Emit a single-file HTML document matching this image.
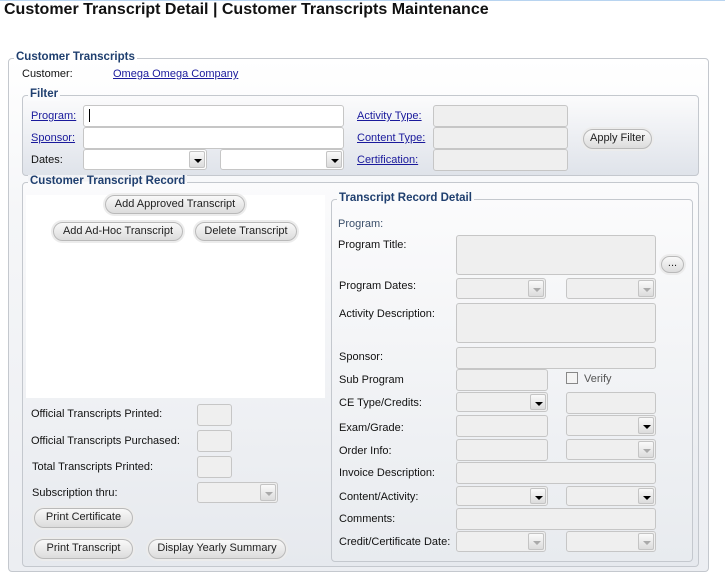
<!DOCTYPE html>
<html><head><style>
*{box-sizing:border-box;margin:0;padding:0}
body{width:725px;height:580px;background:#fff;position:relative;overflow:hidden;font-family:"Liberation Sans",sans-serif;font-size:11px;color:#111}
.a{position:absolute}
.box{position:absolute;border:1px solid #c4c8ce;border-radius:4px}
.lg{position:absolute;font-weight:bold;color:#1f3f6f;font-size:11.5px;padding:0 2px;white-space:nowrap;line-height:13px}
.lb{position:absolute;white-space:nowrap}
.lk{position:absolute;white-space:nowrap;color:#1a1a9c;text-decoration:underline}
.f{position:absolute;background:#efefef;border:1px solid #c6c6c6;border-radius:3px}
.w{background:#fff}
.dd{position:absolute;background:#efefef;border:1px solid #c6c6c6;border-radius:3px}
.dd i{position:absolute;right:1px;top:1px;bottom:1px;width:16px;border:1px solid #c4c4c4;border-radius:2px;background:linear-gradient(#fafafa,#dcdcdc)}
.dd i:after{content:"";position:absolute;left:4px;top:7px;border-left:4px solid transparent;border-right:4px solid transparent;border-top:4px solid #000}
.dd.g i:after{border-top-color:#aaa}
.dd.wh{background:#fff}
.bt{position:absolute;border:1px solid #b9b9b9;border-radius:10px;background:linear-gradient(#f9f9f9,#dcdcdc);box-shadow:0 0 0 2px #ececec;text-align:center;color:#222;font-size:11px;line-height:17px;white-space:nowrap}
</style></head><body>
<div class="a" style="left:0;top:0;width:725px;height:1px;background:#b8d4f0"></div>
<div class="a" style="left:4px;top:1px;font-size:16px;font-weight:bold;white-space:nowrap">Customer Transcript Detail | Customer Transcripts Maintenance</div>

<div class="box" style="left:8px;top:58px;width:701px;height:514px;background:linear-gradient(#fff 0%,#f5f6f8 30%,#eceef2 100%)"></div>
<div class="lg" style="left:14px;top:51px;background:#fff">Customer Transcripts</div>
<div class="lb" style="left:22px;top:68px">Customer:</div>
<div class="lk" style="left:113px;top:68px">Omega Omega Company</div>

<div class="box" style="left:22px;top:95px;width:677px;height:81px;background:linear-gradient(#fbfbfc,#dfe3ea)"></div>
<div class="lg" style="left:28px;top:88px;background:linear-gradient(#fdfdfd 50%,#fafbfc 50%)">Filter</div>
<div class="lk" style="left:31px;top:110px">Program:</div>
<div class="f w" style="left:83px;top:105px;width:261px;height:22px"></div>
<div class="a" style="left:89px;top:109px;width:1px;height:13px;background:#000"></div>
<div class="lk" style="left:31px;top:132px">Sponsor:</div>
<div class="f w" style="left:83px;top:127px;width:261px;height:22px"></div>
<div class="lb" style="left:31px;top:154px">Dates:</div>
<div class="dd wh" style="left:83px;top:149px;width:124px;height:21px"><i></i></div>
<div class="dd wh" style="left:220px;top:149px;width:124px;height:21px"><i></i></div>
<div class="lk" style="left:357px;top:110px">Activity Type:</div>
<div class="f" style="left:433px;top:105px;width:135px;height:22px"></div>
<div class="lk" style="left:357px;top:132px">Content Type:</div>
<div class="f" style="left:433px;top:127px;width:135px;height:22px"></div>
<div class="lk" style="left:357px;top:154px">Certification:</div>
<div class="f" style="left:433px;top:149px;width:135px;height:22px"></div>
<div class="bt" style="left:583px;top:129px;width:69px;height:20px">Apply Filter</div>

<div class="box" style="left:22px;top:182px;width:677px;height:385px;background:linear-gradient(#fbfbfc,#e6e9ee)"></div>
<div class="lg" style="left:28px;top:175px;background:linear-gradient(#f2f3f6 50%,#fbfbfc 50%)">Customer Transcript Record</div>
<div class="a" style="left:26px;top:195px;width:299px;height:203px;background:#fff"></div>
<div class="bt" style="left:105px;top:195px;width:140px;height:19px">Add Approved Transcript</div>
<div class="bt" style="left:53px;top:222px;width:130px;height:19px">Add Ad-Hoc Transcript</div>
<div class="bt" style="left:195px;top:222px;width:102px;height:19px">Delete Transcript</div>
<div class="lb" style="left:31px;top:408px">Official Transcripts Printed:</div>
<div class="f" style="left:197px;top:404px;width:35px;height:22px"></div>
<div class="lb" style="left:31px;top:435px">Official Transcripts Purchased:</div>
<div class="f" style="left:197px;top:430px;width:35px;height:22px"></div>
<div class="lb" style="left:32px;top:461px">Total Transcripts Printed:</div>
<div class="f" style="left:197px;top:456px;width:35px;height:22px"></div>
<div class="lb" style="left:32px;top:487px">Subscription thru:</div>
<div class="dd g" style="left:197px;top:482px;width:81px;height:21px"><i></i></div>
<div class="bt" style="left:34px;top:508px;width:99px;height:20px">Print Certificate</div>
<div class="bt" style="left:34px;top:539px;width:99px;height:20px">Print Transcript</div>
<div class="bt" style="left:148px;top:539px;width:138px;height:20px">Display Yearly Summary</div>

<div class="box" style="left:331px;top:199px;width:362px;height:363px;background:linear-gradient(#fbfbfc,#e8ebef)"></div>
<div class="lg" style="left:337px;top:192px;background:linear-gradient(#fafbfb 50%,#fbfbfc 50%)">Transcript Record Detail</div>
<div class="lb" style="left:338px;top:218px;color:#3b4f6a">Program:</div>
<div class="lb" style="left:338px;top:239px">Program Title:</div>
<div class="f" style="left:456px;top:235px;width:200px;height:40px"></div>
<div class="bt" style="left:661px;top:256px;width:23px;height:17px;line-height:13px">...</div>
<div class="lb" style="left:339px;top:280px">Program Dates:</div>
<div class="dd g" style="left:456px;top:278px;width:90px;height:21px"><i></i></div>
<div class="dd g" style="left:566px;top:278px;width:90px;height:21px"><i></i></div>
<div class="lb" style="left:339px;top:308px">Activity Description:</div>
<div class="f" style="left:456px;top:303px;width:200px;height:40px"></div>
<div class="lb" style="left:339px;top:351px">Sponsor:</div>
<div class="f" style="left:456px;top:347px;width:200px;height:22px"></div>
<div class="lb" style="left:339px;top:374px">Sub Program</div>
<div class="f" style="left:456px;top:369px;width:92px;height:22px"></div>
<div class="a" style="left:566px;top:372px;width:12px;height:12px;border:1px solid #888;background:#f4f4f4"></div>
<div class="lb" style="left:584px;top:373px;color:#555">Verify</div>
<div class="lb" style="left:339px;top:397px">CE Type/Credits:</div>
<div class="dd" style="left:456px;top:392px;width:92px;height:20px"><i></i></div>
<div class="f" style="left:566px;top:392px;width:90px;height:22px"></div>
<div class="lb" style="left:339px;top:422px">Exam/Grade:</div>
<div class="f" style="left:456px;top:415px;width:92px;height:22px"></div>
<div class="dd" style="left:566px;top:415px;width:90px;height:21px"><i></i></div>
<div class="lb" style="left:339px;top:445px">Order Info:</div>
<div class="f" style="left:456px;top:439px;width:92px;height:22px"></div>
<div class="dd g" style="left:566px;top:439px;width:90px;height:21px"><i></i></div>
<div class="lb" style="left:339px;top:467px">Invoice Description:</div>
<div class="f" style="left:456px;top:462px;width:200px;height:22px"></div>
<div class="lb" style="left:339px;top:491px">Content/Activity:</div>
<div class="dd" style="left:456px;top:486px;width:92px;height:20px"><i></i></div>
<div class="dd" style="left:566px;top:486px;width:90px;height:20px"><i></i></div>
<div class="lb" style="left:339px;top:513px">Comments:</div>
<div class="f" style="left:456px;top:508px;width:200px;height:22px"></div>
<div class="lb" style="left:339px;top:536px">Credit/Certificate Date:</div>
<div class="dd g" style="left:456px;top:531px;width:90px;height:21px"><i></i></div>
<div class="dd g" style="left:566px;top:531px;width:90px;height:21px"><i></i></div>
</body></html>
